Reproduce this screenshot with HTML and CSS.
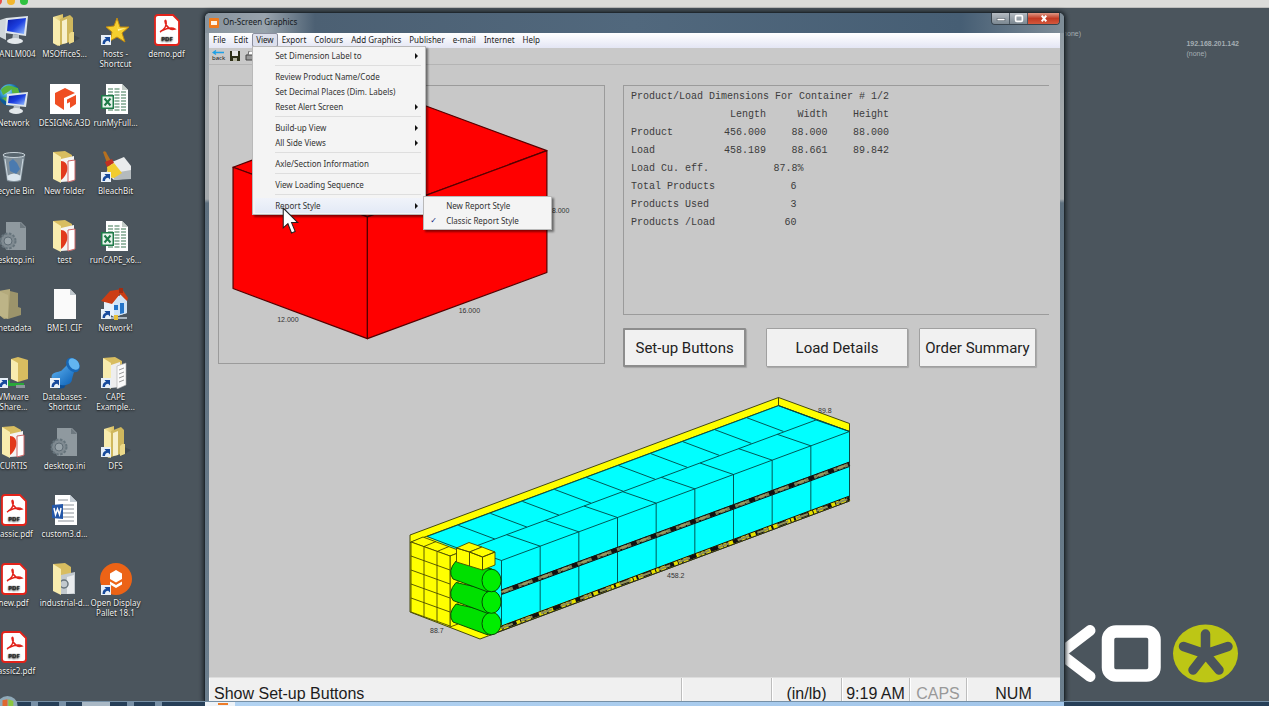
FILE: index.html
```
<!DOCTYPE html>
<html lang="en">
<head>
<meta charset="utf-8">
<title>On-Screen Graphics</title>
<link rel="stylesheet" href="styles.css">
</head>
<body>
<svg class="defs" aria-hidden="true">
  <defs>
    <linearGradient id="gScreen" x1="0" y1="0" x2="1" y2="1"><stop offset="0" stop-color="#0a1aa8"/><stop offset=".5" stop-color="#1c3fe0"/><stop offset="1" stop-color="#9cc4ff"/></linearGradient>
    <linearGradient id="gFolder" x1="0" x2="1"><stop offset="0" stop-color="#f6e9a4"/><stop offset="1" stop-color="#d9bf62"/></linearGradient>
    <linearGradient id="gPin" x1="0" x2="1" y2="1"><stop offset="0" stop-color="#5fb4f2"/><stop offset="1" stop-color="#0b5fb5"/></linearGradient>
    <radialGradient id="gGlobe" cx=".35" cy=".3"><stop offset="0" stop-color="#d5f3ff"/><stop offset=".5" stop-color="#3fa4d8"/><stop offset="1" stop-color="#0d5a96"/></radialGradient>
    <symbol id="arrow" viewBox="0 0 10 10"><rect width="10" height="10" fill="#e8f0f8"/><path d="M1.500 9C1.500 5.500 3 4 5 4L3.500 2H9V7.500L7.200 5.800C5 6 4 7 4 9Z" fill="#174a9c"/></symbol>
    <symbol id="pc" viewBox="0 0 32 32"><path d="M2 6L8 4V26L2 23Z" fill="#cfd6da"/><path d="M8 4L30 2 28 22 7 19Z" fill="#dfe6ec"/><path d="M10 6L28 4 26 20 9 17Z" fill="url(#gScreen)"/><path d="M15 20L21 21 21 26H14Z" fill="#b7c0c6"/><ellipse cx="17" cy="27" rx="8" ry="3" fill="#e3e8eb"/></symbol>
    <symbol id="net" viewBox="0 0 32 32"><circle cx="12" cy="12" r="11" fill="url(#gGlobe)"/><path d="M3 7C8 1 13 2 15 5L10 9 5 12ZM13 3L20 5 22 12 15 14ZM4 15L9 14 10 20Z" fill="#59b33c"/><path d="M9 11L30 9 28 24 8 22Z" fill="#dfe6ec"/><path d="M11 13L28 11 26 22 10 20Z" fill="url(#gScreen)"/><path d="M16 22L22 23V27H15Z" fill="#b7c0c6"/><ellipse cx="18" cy="28" rx="7" ry="3" fill="#e3e8eb"/></symbol>
    <symbol id="bin" viewBox="0 0 32 32"><path d="M5 4L9 30Q16 32 23 30L27 4Z" fill="#93a3ae" opacity=".75"/><path d="M11 11L15 8 19 12 22 18 18 23 12 20Z" fill="#3c74b4" opacity=".8"/><path d="M9 25Q16 20 23 25L22 29Q16 31 10 29Z" fill="#dbe6ee"/><ellipse cx="16" cy="4" rx="11" ry="2.500" fill="#59666f" stroke="#c9d3d9"/><path d="M7 8L10 29M25 8L22 29" stroke="#cfdae1" fill="none"/></symbol>
    <symbol id="folder" viewBox="0 0 32 32"><path d="M22 20L31 24 22 30Z" fill="#2c3439" opacity=".4"/><path d="M4 3L14 0V28L9 32 4 29Z" fill="url(#gFolder)"/><path d="M11 5L21 1 24 4V27L11 31Z" fill="#cfb75d"/><path d="M13 7L18 5V29L13 30Z" fill="#f7f0cc"/><path d="M4 3L11 7V32L4 29Z" fill="#f8ecae"/><path d="M22 18H25V28L20 30V20Z" fill="#ecd98a"/></symbol>
    <symbol id="folderpdf" viewBox="0 0 32 32"><path d="M4 1L16 0 23 4V28L12 30Z" fill="#d8bd60"/><path d="M12 8L25 5V30L12 31Z" fill="#f4f4f4"/><path d="M12 10C20 10 21 22 12 29Z" fill="#e2391c"/><path d="M19 10L26 9V29L19 31Z" fill="#fff" stroke="#c66"/><path d="M4 1L12 6V32L4 28Z" fill="#f8ecae"/></symbol>
    <symbol id="folderdoc" viewBox="0 0 32 32"><path d="M3 1L15 0 22 4V27L11 30Z" fill="#d8bd60"/><path d="M11 8L20 5V30L11 31Z" fill="#eee"/><path d="M17 9L26 6V28L17 32Z" fill="#fbfbfb" stroke="#aaa" stroke-width=".6"/><path d="M19 13L24 11M19 17L24 15M19 21L24 19M19 25L24 23" stroke="#999"/><path d="M3 1L11 6V32L3 28Z" fill="#f8ecae"/></symbol>
    <symbol id="foldergear" viewBox="0 0 32 32"><path d="M4 1L16 0 22 4V27L11 30Z" fill="#d8bd60"/><path d="M12 12L26 9V31L12 31Z" fill="#c2c9ce"/><path d="M18 14L25 12V30L18 31Z" fill="#e9ecee"/><circle cx="15" cy="21" r="4" fill="none" stroke="#68747b" stroke-width="1.500"/><path d="M4 1L12 6V32L4 28Z" fill="#f8ecae"/></symbol>
    <symbol id="meta" viewBox="0 0 32 32"><path d="M1 3L12 1V30L6 31 1 27Z" fill="#b4aa7c"/><path d="M12 3L20 5V19L23 20V27L10 31Z" fill="#9c946b"/><path d="M1 3L10 7V31L1 27Z" fill="#bdb487"/></symbol>
    <symbol id="share" viewBox="0 0 32 32"><path d="M13 2L20 0 30 3V22L20 25Z" fill="#d8bd60"/><path d="M13 2L20 6V25L13 22Z" fill="#f8ecae"/><path d="M2 27L12 23 12 26H26V29H10Z" fill="#29a83a"/><path d="M18 28H27V31H18Z" fill="#8c969c"/><use href="#arrow" x="0" y="21" width="10" height="10"/></symbol>
    <symbol id="pdf" viewBox="0 0 32 32"><path d="M7 1H22L28 7V28Q28 31 25 31H7Q4 31 4 28V4Q4 1 7 1Z" fill="#fff" stroke="#e2231a" stroke-width="1.800"/><path d="M9 18C14 15 16 11 15 7C14 5 13 8 16 12C18 15 21 16 24 15C21 13 16 14 10 17" fill="none" stroke="#e2231a" stroke-width="1.500"/><text x="16" y="27" font-size="6" font-weight="700" text-anchor="middle" fill="#333">PDF</text></symbol>
    <symbol id="star" viewBox="0 0 32 32"><path d="M17 4L20 13 29 13 22 19 25 28 17 23 10 27 12 18 6 13 14 12Z" fill="#f6cf2e" stroke="#c08a10"/><path d="M17 6L18 15 26 14 18 17Z" fill="#fff4a8"/></symbol>
    <symbol id="excel" viewBox="0 0 32 32"><path d="M6 1H22L28 7V31H6Z" fill="#fff"/><path d="M22 1V7H28Z" fill="#c3ccc7"/><path d="M8 6H20M8 9H27M8 12H27M8 15H27M8 18H27M8 21H27M8 24H27M8 27H27" stroke="#9dbba9" stroke-width="1.800" stroke-dasharray="5 1.500"/><rect x="1" y="12" width="13" height="14" fill="#1e7a48"/><rect x="2.500" y="13.500" width="10" height="11" fill="#e8f3ec"/><path d="M4.500 15.500L10.500 22.500M10.500 15.500L4.500 22.500" stroke="#1e7a48" stroke-width="2"/></symbol>
    <symbol id="word" viewBox="0 0 32 32"><path d="M6 1H21L28 8V31H6Z" fill="#fff"/><path d="M21 1V8H28Z" fill="#c5ced6"/><path d="M9 6H19M14 11H25M14 15H25M14 19H25M14 23H25M9 27H25" stroke="#8b9299"/><path d="M3 11L14 10V25L3 24Z" fill="#2457a8"/><path d="M5 14L6.500 20.500 8.500 15 10.500 20.500 12 14" fill="none" stroke="#fff" stroke-width="1.500"/></symbol>
    <symbol id="file" viewBox="0 0 32 32"><path d="M5 1H21L27 7V31H5Z" fill="#fafafa"/><path d="M21 1V7H27Z" fill="#bfc7cc"/></symbol>
    <symbol id="ini" viewBox="0 0 32 32"><path d="M8 2H23L28 7V30H8Z" fill="#8f999f"/><path d="M22 2V8H28Z" fill="#6e7980"/><circle cx="10" cy="21" r="7.500" fill="#7f8a91" stroke="#66747c" stroke-width="2" stroke-dasharray="2.500 1.500"/><circle cx="10" cy="21" r="4" fill="#98a3a9" stroke="#5f6c75"/></symbol>
    <symbol id="house" viewBox="0 0 32 32"><path d="M4 14L15 6 27 12V25L14 29 4 23Z" fill="#e7f1fa"/><path d="M14 14L21 6 27 13V25L14 29Z" fill="#cfe3f5"/><path d="M1 13L10 3 22 1 28 10 27 13 20 6 12 16Z" fill="#cc3d14"/><path d="M19 0H23V5H19Z" fill="#a32c10"/><path d="M14 17H18V22H14ZM20 15H24V25L20 26Z" fill="#2474c8"/><path d="M9 30H27" stroke="#c9d6df" stroke-width="1.500"/><path d="M14 27H18V32H14Z" fill="#e8bf35"/></symbol>
    <symbol id="pin" viewBox="0 0 32 32"><path d="M16 18L20 22 15 31 9 32Z" fill="#0d4f96"/><path d="M18 8L25 15 23 22C23 27 17 29 12 28C6 26 1 22 3 18C5 15 9 15 12 14Z" fill="url(#gPin)"/><ellipse cx="24" cy="8" rx="6" ry="8" transform="rotate(-40 24 8)" fill="#1767b6"/><ellipse cx="25" cy="7" rx="4.500" ry="6.500" transform="rotate(-40 25 7)" fill="#62b5f0"/></symbol>
    <symbol id="pallet" viewBox="0 0 32 32"><circle cx="16" cy="16" r="16" fill="#ec6316"/><path d="M16 7L22 10.500V16L16 19.500 10 16V10.500Z" fill="#fff"/><path d="M10 18.500L16 22 22 18.500V21.500L16 25 10 21.500Z" fill="#fff"/></symbol>
    <symbol id="design" viewBox="0 0 32 32"><rect x="1" y="1" width="30" height="30" fill="#fff"/><path d="M16 5L26 10 15 15V27L6 21V10Z" fill="#ef4e23"/><path d="M18 16.500L27 12V21L21 25V19L18 20.500Z" fill="#ef4e23"/></symbol>
    <symbol id="broom" viewBox="0 0 32 32"><path d="M12 11L24 6 31 15V27L14 29 6 22Z" fill="#e9ebec"/><path d="M14 22L31 19V28L14 29Z" fill="#b4babd"/><path d="M3 1Q6 -1 7 3L11 10 7 12Z" fill="#b6701f"/><path d="M5 11L12 8 14 12 7 16Z" fill="#c22f21"/><path d="M7 16L14 12 22 22 14 27 8 26Z" fill="#f2cc2f"/></symbol>
  </defs>
</svg>

<header class="host-bar"><i class="dot red"></i><i class="dot yellow"></i><i class="dot green"></i></header>

<main class="desktop">
  <div class="icons">
    <div class="icon c1"><svg><use href="#pc"/></svg><span class="long">ANLM004</span></div>
    <div class="icon c1"><svg><use href="#net"/></svg><span>Network</span></div>
    <div class="icon c1"><svg><use href="#bin"/></svg><span>Recycle Bin</span></div>
    <div class="icon c1"><svg><use href="#ini"/></svg><span>desktop.ini</span></div>
    <div class="icon c1"><svg><use href="#meta"/></svg><span>metadata</span></div>
    <div class="icon c1"><svg><use href="#share"/></svg><span>VMware<br>Share...</span></div>
    <div class="icon c1"><svg><use href="#folderpdf"/></svg><span>CURTIS</span></div>
    <div class="icon c1"><svg><use href="#pdf"/></svg><span>classic.pdf</span></div>
    <div class="icon c1"><svg><use href="#pdf"/></svg><span>new.pdf</span></div>
    <div class="icon c1"><svg><use href="#pdf"/></svg><span>classic2.pdf</span></div>

    <div class="icon c2"><svg><use href="#folder"/></svg><span>MSOfficeS...</span></div>
    <div class="icon c2"><svg><use href="#design"/></svg><span>DESIGN6.A3D</span></div>
    <div class="icon c2"><svg><use href="#folderpdf"/></svg><span>New folder</span></div>
    <div class="icon c2"><svg><use href="#folderpdf"/></svg><span>test</span></div>
    <div class="icon c2"><svg><use href="#file"/></svg><span>BME1.CIF</span></div>
    <div class="icon c2"><svg viewBox="0 0 32 32"><use href="#pin"/><use href="#arrow" x="1" y="21" width="10" height="10"/></svg><span>Databases -<br>Shortcut</span></div>
    <div class="icon c2"><svg><use href="#ini"/></svg><span>desktop.ini</span></div>
    <div class="icon c2"><svg><use href="#word"/></svg><span>custom3.d...</span></div>
    <div class="icon c2"><svg><use href="#foldergear"/></svg><span>industrial-d...</span></div>

    <div class="icon c3"><svg viewBox="0 0 32 32"><use href="#star"/><use href="#arrow" x="1" y="21" width="10" height="10"/></svg><span>hosts -<br>Shortcut</span></div>
    <div class="icon c3"><svg><use href="#excel"/></svg><span>runMyFull...</span></div>
    <div class="icon c3"><svg viewBox="0 0 32 32"><use href="#broom"/><use href="#arrow" x="1" y="21" width="10" height="10"/></svg><span>BleachBit</span></div>
    <div class="icon c3"><svg><use href="#excel"/></svg><span>runCAPE_x6...</span></div>
    <div class="icon c3"><svg viewBox="0 0 32 32"><use href="#house"/><use href="#arrow" x="1" y="21" width="10" height="10"/></svg><span>Network!</span></div>
    <div class="icon c3"><svg viewBox="0 0 32 32"><use href="#folderdoc"/><use href="#arrow" x="1" y="21" width="10" height="10"/></svg><span>CAPE<br>Example...</span></div>
    <div class="icon c3"><svg viewBox="0 0 32 32"><use href="#folder"/><use href="#arrow" x="1" y="21" width="10" height="10"/></svg><span>DFS</span></div>
    <div class="icon c3 r9"><svg viewBox="0 0 32 32"><use href="#pallet"/><use href="#arrow" x="1" y="22" width="10" height="10"/></svg><span>Open Display<br>Pallet 18.1</span></div>

    <div class="icon c4"><svg><use href="#pdf"/></svg><span>demo.pdf</span></div>
  </div>

  <p class="host-note behind">(none)</p>
  <p class="host-note"><b>192.168.201.142</b><br>(none)</p>

  <svg class="brand" viewBox="1040 600 229 106" role="img" aria-label="Esko logo">
    <path d="M1090 630.500L1060 653.500 1090 676.500" fill="none" stroke="#fff" stroke-width="11" stroke-linecap="round"/>
    <rect x="1108" y="631.500" width="46.500" height="44" rx="8" fill="none" stroke="#fff" stroke-width="12.500"/>
    <ellipse cx="1205.500" cy="653.500" rx="32.500" ry="29" fill="#bdc615"/>
    <path d="M1205.500 634V654M1183.500 646.500L1205.500 654M1228 646.500L1205.500 654M1193 670L1205.500 654M1219 670L1205.500 654" stroke="#4b545c" stroke-width="9.500" stroke-linecap="round" stroke-linejoin="round"/>
  </svg>

  <section class="window">
    <div class="titlebar">
      <svg class="app-icon" viewBox="0 0 10 10"><rect width="10" height="10" rx="1" fill="#f07a1c"/><path d="M2 3H8V7H2Z" fill="#fff3e4"/></svg>
      <h1>On-Screen Graphics</h1>
      <div class="controls">
        <button aria-label="Minimize"><svg viewBox="0 0 10 8"><rect x="1.500" y="4" width="7" height="2" fill="#fff" stroke="#555f68" stroke-width=".5"/></svg></button>
        <button aria-label="Maximize"><svg viewBox="0 0 10 8"><rect x="2" y="1.500" width="6" height="5" rx="1" fill="none" stroke="#fff" stroke-width="1.500"/></svg></button>
        <button class="close" aria-label="Close"><svg viewBox="0 0 10 8"><path d="M3 1.500L7 6.500M7 1.500L3 6.500" stroke="#fff" stroke-width="1.800"/></svg></button>
      </div>
    </div>

    <nav class="menubar">
      <button>File</button>
      <button>Edit</button>
      <div class="open-menu">
        <button class="active" aria-expanded="true">View</button>
        <div class="menu">
          <button class="more">Set Dimension Label to</button>
          <hr>
          <button>Review Product Name/Code</button>
          <button>Set Decimal Places (Dim. Labels)</button>
          <button class="more">Reset Alert Screen</button>
          <hr>
          <button class="more">Build-up View</button>
          <button class="more">All Side Views</button>
          <hr>
          <button>Axle/Section Information</button>
          <hr>
          <button>View Loading Sequence</button>
          <hr>
          <div class="open-menu">
            <button class="more hover" aria-expanded="true">Report Style</button>
            <div class="menu submenu">
              <button>New Report Style</button>
              <button class="checked">Classic Report Style</button>
            </div>
            <svg class="cursor" viewBox="0 0 16 26"><path d="M1 1V20L5.500 16 9 25 12.500 23.500 9 15H15Z" fill="#fff" stroke="#222" stroke-width="1"/></svg>
          </div>
        </div>
      </div>
      <button>Export</button>
      <button>Colours</button>
      <button>Add Graphics</button>
      <button>Publisher</button>
      <button>e-mail</button>
      <button>Internet</button>
      <button>Help</button>
    </nav>

    <div class="toolbar">
      <button class="back"><svg viewBox="0 0 12 5"><path d="M1 2.500H12M4 .5L1 2.500 4 4.500" fill="none" stroke="#1ea0e6" stroke-width="1.300"/></svg>back</button>
      <button aria-label="Save"><svg viewBox="0 0 10 10"><rect width="10" height="10" fill="#2e3018"/><rect x="2" width="6" height="5" fill="#e8e8e8"/><rect x="3" y="7" width="4" height="3" fill="#b5b5a0"/></svg></button>
      <button aria-label="Print"><svg viewBox="0 0 10 10"><path d="M3 4L4 0H9L8 4" fill="#fff" stroke="#444" stroke-width=".8"/><path d="M1 4H9V9H1Z" fill="#999" stroke="#444"/></svg></button>
    </div>

    <div class="work">
      <div class="top">
        <div class="panel product">
          <svg viewBox="219 86 384 276" role="img" aria-label="Product box, 12.000 by 16.000">
            <g fill="#f00" stroke="#500" stroke-width="1.200" stroke-linejoin="round">
              <path d="M233 167L412 101 546 150.500 367 216.500Z"/>
              <path d="M233 167L367 216.500V338L233 288Z"/>
              <path d="M367 216.500L546 150.500V272L367 338Z"/>
            </g>
            <g class="dim"><text x="277" y="321">12.000</text><text x="458" y="312">16.000</text><text x="551" y="213">8.000</text></g>
          </svg>
        </div>
        <div class="side">
          <div class="panel report">
            <table>
              <caption>Product/Load Dimensions For Container # 1/2</caption>
              <thead><tr><th></th><th>Length</th><th>Width</th><th>Height</th></tr></thead>
              <tbody>
                <tr><th>Product</th><td>456.000</td><td>88.000</td><td>88.000</td></tr>
                <tr><th>Load</th><td>458.189</td><td>88.661</td><td>89.842</td></tr>
                <tr><th>Load Cu. eff.</th><td></td><td class="pct">87.8%</td><td></td></tr>
                <tr><th>Total Products</th><td></td><td class="count">6</td><td></td></tr>
                <tr><th>Products Used</th><td></td><td class="count">3</td><td></td></tr>
                <tr><th>Products /Load</th><td></td><td class="count">60</td><td></td></tr>
              </tbody>
            </table>
          </div>
          <div class="actions">
            <button class="default">Set-up Buttons</button>
            <button>Load Details</button>
            <button>Order Summary</button>
          </div>
        </div>
      </div>

      <svg class="scene" viewBox="209 367 851 310" role="img" aria-label="Loaded container">
        <g stroke="#333800" stroke-width=".9" stroke-linejoin="round">
          <path d="M410 535L778.500 397.500 849.500 423.500V501L480 639 410 612Z" fill="#ff0"/>
          <path d="M410 542.500L778.500 405.500 849.500 431.500M778.500 397.500V405.500" fill="none"/>
        </g>
        <path d="M427 536.500L778.500 405.700 849.500 431.500V500L501.500 630 480 560Z" fill="#0ff"/>
        <g id="cargo" fill="none" stroke="#044" stroke-width=".9"></g>
        <g class="band">
          <path d="M501.500 592L849.500 464" stroke="#77845a" stroke-width="4.500"/>
          <path d="M501.500 590L849.500 462M501.500 594.500L849.500 466.500" stroke="#111" stroke-width="1"/>
          <path d="M501.500 592L849.500 464" stroke="#111" stroke-width="4" stroke-dasharray="2 5 1 4 6 3"/>
          <path d="M501.500 592L849.500 464" stroke="#9a9a60" stroke-width="2" stroke-dasharray="9 12"/>
          <path d="M499 629L849.500 498.500" stroke="#e6e000" stroke-width="5"/>
          <path d="M501.500 626L849.500 496" stroke="#111" stroke-width="1"/>
          <path d="M501.500 628L849.500 498.500" stroke="#111" stroke-width="4" stroke-dasharray="2 5 9 4 1 3"/>
          <path d="M501.500 628L849.500 498.500" stroke="#8f8f5a" stroke-width="2.200" stroke-dasharray="12 9"/>
          <path d="M490 635L849.500 501" stroke="#222" stroke-width="1"/>
        </g>
        <g fill="#ff0" stroke="#4a4a00" stroke-width=".9" stroke-linejoin="round">
          <path d="M411 542L423 537 462 551.500 450 556Z"/>
          <path d="M450 556L458 553V624L450 627Z"/>
          <path d="M411 542L450 556V626L411 612Z"/>
          <path d="M411 556L450 570M411 570L450 584M411 584L450 598M411 598L450 612M424 546.500V616.500M437 551.500V621.500M424 546.500L436 541.500M437 551.500L449 546.500" fill="none"/>
        </g>
        <g fill="#00e000" stroke="#043c04" stroke-width=".9">
          <g id="roll"><path d="M456 604L492 612 488 635 453 622Q447 614 456 604Z"/><ellipse cx="491.500" cy="623.500" rx="9.500" ry="11.300" fill="#0e0"/></g>
          <use href="#roll" y="-21.500"/>
          <use href="#roll" y="-43"/>
        </g>
        <g fill="#ff0" stroke="#4a4a00" stroke-width=".9" stroke-linejoin="round">
          <path d="M456.500 548L469 542.500 482 547 469.500 552ZM456.500 548L469.500 552V566L456.500 562Z"/>
          <path d="M469.500 552L482 547 495 552 482.500 557ZM469.500 552L482.500 557V570L469.500 566ZM482.500 557L495 552V565L482.500 570Z"/>
        </g>
        <g class="dim"><text x="818" y="413">89.8</text><text x="667" y="578">458.2</text><text x="430" y="633">88.7</text></g>
      </svg>
    </div>

    <footer class="status">
      <span class="hint">Show Set-up Buttons</span>
      <span class="blank"></span>
      <span class="unit">(in/lb)</span>
      <span class="time">9:19 AM</span>
      <span class="caps">CAPS</span>
      <span class="num">NUM</span>
    </footer>
  </section>
</main>

<footer class="taskbar">
  <svg class="orb" viewBox="0 0 20 12"><ellipse cx="7" cy="11" rx="12" ry="11" fill="#8fa9b8"/><path d="M1 5L7 4V12H1Z" fill="#e0672f"/><path d="M8 4L14 6V12H8Z" fill="#8cc63f"/></svg>
  <i class="tile"></i><i class="tile"></i><i class="tile lit"></i><i class="tile"></i><i class="tile"></i>
  <div class="preview"><i></i></div>
</footer>
<script src="scene.js"></script>
</body>
</html>
```

FILE: scene.js
```
// Case outlines on the loaded container: nine columns on the front face, two strips on top.
(function () {
  var d = [];
  var columns = 9;
  for (var i = 0; i <= columns; i++) {
    var x = 501.5 + (348 / columns) * i;
    var y = 560.5 - (129 / columns) * i;
    d.push('M' + x + ' ' + y + 'V' + (y + 69));
    d.push('M' + x + ' ' + y + 'l-33.5 -11.5');
  }
  for (var j = 0; j <= 10; j++) {
    d.push('M' + (815.5 - 32.07 * j) + ' ' + (419.5 + 11.95 * j) + 'l-36.500 -13.700');
  }
  d.push('M501.5 560.5L849.5 431.5L778.500 405.700L427 536.500');
  d.push('M468 549L816 420');
  d.push('M427 536.500L460 549');
  var path = document.createElementNS('http://www.w3.org/2000/svg', 'path');
  path.setAttribute('d', d.join(''));
  document.getElementById('cargo').appendChild(path);
})();
```

FILE: styles.css
```
* { box-sizing: border-box; }
body {
  margin: 0;
  height: 100vh;
  overflow: hidden;
  display: flex;
  flex-direction: column;
  background: #4b555d;
  font-family: "Noto Sans", "Open Sans", sans-serif;
  font-size: 8px;
}
button {
  font: inherit;
  color: inherit;
  margin: 0;
  padding: 0;
  border: 0;
  background: none;
  white-space: nowrap;
}
svg { display: block; }
.defs { position: absolute; width: 0; height: 0; }

.host-bar {
  flex: none;
  height: 8px;
  display: flex;
  gap: 5px;
  overflow: hidden;
  background: #dcdcda;
  border-bottom: 1px solid #bdbdbc;
}
.dot { flex: none; width: 8px; height: 8px; border-radius: 50%; margin-top: -3px; }
.dot.red { background: #e8504a; margin-left: -6px; }
.dot.yellow { background: #f2b62e; }
.dot.green { background: #2fc140; }

.desktop { flex: 1; min-height: 0; position: relative; padding: 6px 0 1px; }
.icons {
  height: 100%;
  width: 204px;
  margin-left: -12px;
  display: grid;
  grid-template-columns: repeat(4, 51px);
  grid-template-rows: repeat(10, 1fr);
  grid-auto-flow: column;
}
.icon {
  display: flex;
  flex-direction: column;
  align-items: center;
  gap: 3px;
  color: #f2f4f5;
  font-size: 8px;
  line-height: 10px;
  text-align: center;
  white-space: nowrap;
  text-shadow: 0 1px 2px #111, 0 0 1px #222;
}
.icon svg { flex: none; width: 32px; height: 32px; }
.icon text { font-family: "Liberation Sans", sans-serif; }
.icon .long { padding-left: 8px; }
.c1 { grid-column: 1; }
.c2 { grid-column: 2; }
.c3 { grid-column: 3; }
.c4 { grid-column: 4; }
.r9 { grid-row: 9; }

.host-note {
  position: absolute;
  top: 31px;
  right: 30px;
  margin: 0;
  color: #a4adb3;
  font: 7px/10px "Liberation Sans", sans-serif;
}
.host-note.behind { top: 21px; right: 188px; }
.brand { position: absolute; right: 0; bottom: -5px; width: 229px; height: 106px; }

.window {
  position: absolute;
  top: 4px;
  bottom: 0;
  left: 204px;
  right: 204px;
  display: flex;
  flex-direction: column;
  padding: 0 4px;
  border: 1px solid #20282e;
  border-bottom: 0;
  border-radius: 6px 6px 0 0;
  background: linear-gradient(#8b98a3 0, #a3a8ab 100px, #a3a8ab 186px, #5d6f7e 190px, #6b7e8d 100%);
  box-shadow: 0 0 4px 1px #1b2228;
}
.titlebar {
  flex: none;
  height: 20px;
  margin: 0 -4px;
  padding: 0 4px;
  display: flex;
  align-items: center;
  gap: 4px;
  border-radius: 5px 5px 0 0;
  background: linear-gradient(90deg, #87939d 0, #98a3ac 60px, #4c6073 110px, #51687d 50%, #465e74 88%, #7f8d98 100%);
}
.app-icon { width: 10px; height: 10px; }
.titlebar h1 { margin: 0; flex: 1; font-size: 8px; line-height: 17px; align-self: flex-start; font-weight: 400; color: #15191c; }
.controls { align-self: flex-start; display: flex; height: 12px; border: 1px solid #38434c; border-top: 0; border-radius: 0 0 4px 4px; overflow: hidden; }
.controls button { width: 18px; display: grid; place-items: center; background: linear-gradient(#b5bcc2, #7b8791); border-right: 1px solid #4c5862; }
.controls .close { width: 31px; border: 0; background: linear-gradient(#df9884, #c23a23 50%, #d4583c); }
.controls svg { width: 12px; height: 9px; }

.menubar {
  flex: none;
  height: 15px;
  display: flex;
  background: linear-gradient(#fff, #e4e6f4);
  color: #222;
}
.menubar > button, .open-menu > .active { height: 14px; padding: 0 3px; line-height: 12px; border: 1px solid transparent; }
.open-menu { position: relative; }
.open-menu > .active { border-color: #8b8f9e; border-radius: 2px; background: #dcdfec; }
.menu {
  position: absolute;
  z-index: 2;
  top: 13px;
  left: 0;
  width: 174px;
  padding: 1px 2px;
  border: 1px solid #b9b9b9;
  background: #f4f4f4;
  box-shadow: 2px 2px 2px #0007;
}
.menu button { display: flex; align-items: center; width: 100%; height: 15px; padding: 0 5px 0 20px; text-align: left; color: #333; }
.menu hr { height: 1px; margin: 2px 2px 3px 20px; border: 0; background: #dedede; }
.menu .more { justify-content: space-between; }
.menu .more::after { content: ""; border: 3px solid transparent; border-left: 3px solid #111; border-right: 0; }
.menu .hover { background: linear-gradient(#f0f3fa, #e3eaf6); }
.submenu { top: -2px; left: 168px; width: 129px; }
.menu .checked::before { content: "✓"; width: 12px; margin-left: -16px; margin-right: 4px; font-family: "DejaVu Sans", sans-serif; font-weight: 700; color: #10207a; }
.cursor { position: absolute; z-index: 3; top: 9px; left: 27px; width: 17px; height: 27px; }

.toolbar {
  flex: none;
  height: 17px;
  display: flex;
  align-items: center;
  gap: 5px;
  padding: 0 3px;
  background: #c9c9c9;
  border-bottom: 1px solid #b4b4b4;
}
.toolbar svg { width: 10px; height: 10px; }
.toolbar .back { font-size: 6px; line-height: 7px; color: #111; }
.toolbar .back svg { width: 12px; height: 5px; }

.work { flex: 1; min-height: 0; display: flex; flex-direction: column; background: #c8c8c8; padding-top: 20px; }
.top { display: flex; align-items: flex-start; gap: 18px; padding: 0 11px 0 9px; }
.panel { border: 1px solid #9b9b9b; }
.product { flex: 386 1 0; }
.product svg { width: 100%; height: auto; }
.side { flex: 427 1 0; display: flex; flex-direction: column; gap: 13px; }
.report { min-height: 230px; border-right: 0; padding: 2px 7px; }
.report table { border-collapse: collapse; font: 10px/18px "Liberation Mono", monospace; color: #3c3c3c; }
.report caption { text-align: left; white-space: nowrap; }
.report th, .report td { padding: 0; height: 18px; font-weight: 400; text-align: right; white-space: nowrap; }
.report tbody th { text-align: left; width: 86px; }
.report td:nth-child(2) { width: 48px; }
.report td:nth-child(3) { width: 61px; }
.report td:nth-child(4) { width: 61px; }
.report .pct { padding-right: 24px; }
.report .count { padding-right: 31px; }
.actions { display: flex; height: 39px; padding-right: 13px; }
.actions button {
  flex: 118 1 0;
  background: #f1f1f1;
  border: 1px solid #a0a0a0;
  border-radius: 1px;
  box-shadow: 1px 1px 1px #8888;
  font: 15px "Roboto", sans-serif;
  color: #222;
}
.actions .default { flex-grow: 122; border: 2px solid #8d8d8d; margin-right: 20px; }
.actions button:nth-child(2) { flex-grow: 143; margin-right: 11px; }
.scene { flex: 1; min-height: 0; width: 100%; }
.dim { font: 7px "Liberation Sans", sans-serif; fill: #333; }
.band { fill: none; }

.status {
  flex: none;
  height: 24px;
  display: flex;
  overflow: hidden;
  background: #f0f0f0;
  border-top: 1px solid #ddd;
  font: 16px/32px "Liberation Sans", sans-serif;
  color: #1c1c1c;
}
.status span { flex: none; text-align: center; white-space: nowrap; border-left: 1px solid #bdbdbd; box-shadow: inset 1px 0 #fff; }
.status .hint { flex: 1; text-align: left; padding-left: 5px; border: 0; }
.blank { width: 90px; }
.unit { width: 70px; }
.time { width: 68px; }
.status .caps { width: 57px; color: #999; }
.num { width: 94px; }

.taskbar {
  flex: none;
  height: 5px;
  position: relative;
  display: flex;
  gap: 12px;
  background: #263f58;
  border-top: 1px solid #7690a6;
}
.orb { position: absolute; left: 0; bottom: 0; width: 20px; height: 10px; }
.tile { width: 16px; height: 4px; background: linear-gradient(90deg, transparent 5px, #7890a6 5px, #7890a6 12px, transparent 12px); }
.tile:first-of-type { margin-left: 26px; }
.tile.lit { width: 28px; background: #a9b8c5; }
.preview { position: absolute; left: 205px; right: 205px; top: 0; height: 4px; background: linear-gradient(90deg, #eef3f8 30px, #b2d3f2 30px, #a2c6ea); }
.preview i { display: block; width: 10px; height: 2px; margin: 1px 0 0 13px; background: #ee7c28; }
```
